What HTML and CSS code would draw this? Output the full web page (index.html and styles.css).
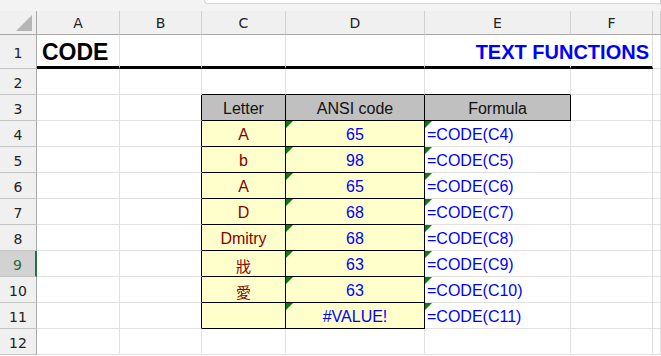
FILE: index.html
```html
<!DOCTYPE html>
<html lang="en">
<head>
    <meta charset="UTF-8">
    <title>CODE - Text Functions</title>
    <link rel="stylesheet" href="styles.css">
</head>
<body>
    <!-- Formula bar edge -->
    <div class="topbar">
        <div class="formula-box"></div>
    </div>

    <!-- Sheet grid -->
    <div class="sheet">
        <!-- Column headers -->
        <div class="corner"><span class="select-all"></span></div>
        <div class="colhead">A</div>
        <div class="colhead">B</div>
        <div class="colhead">C</div>
        <div class="colhead">D</div>
        <div class="colhead">E</div>
        <div class="colhead">F</div>
        <div class="colhead"></div>

        <!-- Row 1 -->
        <div class="rowhead">1</div>
        <div class="cell rule title">CODE</div>
        <div class="cell rule"></div>
        <div class="cell rule"></div>
        <div class="cell rule"></div>
        <div class="cell rule no-right"></div>
        <div class="cell rule subtitle">TEXT FUNCTIONS</div>
        <div class="cell"></div>

        <!-- Row 2 -->
        <div class="rowhead">2</div>
        <div class="cell"></div>
        <div class="cell"></div>
        <div class="cell top-edge"></div>
        <div class="cell top-edge"></div>
        <div class="cell top-edge"></div>
        <div class="cell"></div>
        <div class="cell"></div>

        <!-- Row 3 -->
        <div class="rowhead">3</div>
        <div class="cell"></div>
        <div class="cell left-edge"></div>
        <div class="cell head">Letter</div>
        <div class="cell head">ANSI code</div>
        <div class="cell head">Formula</div>
        <div class="cell"></div>
        <div class="cell"></div>

        <!-- Row 4 -->
        <div class="rowhead">4</div>
        <div class="cell"></div>
        <div class="cell left-edge"></div>
        <div class="cell letter">A</div>
        <div class="cell code flag">65</div>
        <div class="cell formula flag">=CODE(C4)</div>
        <div class="cell"></div>
        <div class="cell"></div>

        <!-- Row 5 -->
        <div class="rowhead">5</div>
        <div class="cell"></div>
        <div class="cell left-edge"></div>
        <div class="cell letter">b</div>
        <div class="cell code flag">98</div>
        <div class="cell formula flag">=CODE(C5)</div>
        <div class="cell"></div>
        <div class="cell"></div>

        <!-- Row 6 -->
        <div class="rowhead">6</div>
        <div class="cell"></div>
        <div class="cell left-edge"></div>
        <div class="cell letter">A</div>
        <div class="cell code flag">65</div>
        <div class="cell formula flag">=CODE(C6)</div>
        <div class="cell"></div>
        <div class="cell"></div>

        <!-- Row 7 -->
        <div class="rowhead">7</div>
        <div class="cell"></div>
        <div class="cell left-edge"></div>
        <div class="cell letter">D</div>
        <div class="cell code flag">68</div>
        <div class="cell formula flag">=CODE(C7)</div>
        <div class="cell"></div>
        <div class="cell"></div>

        <!-- Row 8 -->
        <div class="rowhead">8</div>
        <div class="cell"></div>
        <div class="cell left-edge"></div>
        <div class="cell letter">Dmitry</div>
        <div class="cell code flag">68</div>
        <div class="cell formula flag">=CODE(C8)</div>
        <div class="cell"></div>
        <div class="cell"></div>

        <!-- Row 9 (active row) -->
        <div class="rowhead active">9</div>
        <div class="cell"></div>
        <div class="cell left-edge"></div>
        <div class="cell letter cjk">戕</div>
        <div class="cell code flag">63</div>
        <div class="cell formula flag">=CODE(C9)</div>
        <div class="cell"></div>
        <div class="cell"></div>

        <!-- Row 10 -->
        <div class="rowhead">10</div>
        <div class="cell"></div>
        <div class="cell left-edge"></div>
        <div class="cell letter cjk">愛</div>
        <div class="cell code flag">63</div>
        <div class="cell formula flag">=CODE(C10)</div>
        <div class="cell"></div>
        <div class="cell"></div>

        <!-- Row 11 -->
        <div class="rowhead">11</div>
        <div class="cell"></div>
        <div class="cell left-edge"></div>
        <div class="cell letter"></div>
        <div class="cell code flag">#VALUE!</div>
        <div class="cell formula flag">=CODE(C11)</div>
        <div class="cell"></div>
        <div class="cell"></div>

        <!-- Row 12 -->
        <div class="rowhead">12</div>
        <div class="cell"></div>
        <div class="cell"></div>
        <div class="cell"></div>
        <div class="cell"></div>
        <div class="cell"></div>
        <div class="cell"></div>
        <div class="cell"></div>
    </div>
</body>
</html>
```

FILE: styles.css
```css
/* General */
* {
    box-sizing: border-box;
}

body {
    margin: 0;
    background: #fff;
    font-family: 'Liberation Sans', Arial, sans-serif;
    overflow: hidden;
}

/* Formula bar edge */
.topbar {
    height: 11px;
    background: #f3f3f3;
    padding-left: 204px;
}

.formula-box {
    height: 4px;
    background: #fff;
    border: 1px solid #d6d6d6;
    border-top: none;
    border-bottom-left-radius: 6px;
}

/* Sheet grid */
.sheet {
    display: grid;
    grid-template-columns: 37px 83px 82px 84px 139px 146px 82px 1fr;
    grid-template-rows: 24px 34px repeat(11, 26px);
}

.corner {
    background: #f0f0f0;
    border-right: 1px solid #a8a8a8;
    border-bottom: 1px solid #a8a8a8;
    display: flex;
    align-items: flex-end;
    justify-content: flex-end;
    padding: 0 4px 3px 0;
}

.select-all {
    width: 0;
    height: 0;
    border-left: 16px solid transparent;
    border-bottom: 16px solid #b6b6b6;
}

.colhead {
    background: #f0f0f0;
    border-right: 1px solid #d0d0d0;
    border-bottom: 1px solid #a8a8a8;
    display: flex;
    align-items: center;
    justify-content: center;
    padding-top: 1px;
    font-family: 'DejaVu Sans', sans-serif;
    font-size: 14px;
    color: #222;
}

.rowhead {
    background: #f0f0f0;
    border-right: 1px solid #a8a8a8;
    border-bottom: 1px solid #c4c4c4;
    display: flex;
    align-items: center;
    justify-content: center;
    padding-top: 2px;
    font-family: 'DejaVu Sans', sans-serif;
    font-size: 14px;
    color: #222;
}

.rowhead.active {
    background: #d2d2d2;
    color: #1e6b41;
    border-right: 2px solid #217346;
}

/* Cells */
.cell {
    position: relative;
    border-right: 1px solid #e1e1e1;
    border-bottom: 1px solid #e1e1e1;
    display: flex;
    align-items: center;
    padding-top: 3px;
    font-size: 16px;
    white-space: nowrap;
}

.cell.rule {
    border-bottom: 3px solid #000;
}

.cell.no-right {
    border-right-color: transparent;
}

.title {
    font-size: 23px;
    font-weight: 700;
    padding-left: 5px;
}

.subtitle {
    justify-content: flex-end;
    font-size: 20px;
    font-weight: 700;
    color: #0000ff;
    padding-right: 3px;
}

.top-edge {
    border-bottom-color: #000;
}

.left-edge {
    border-right-color: #000;
}

/* Table */
.head {
    background: #c0c0c0;
    border-right-color: #000;
    border-bottom-color: #000;
    justify-content: center;
    color: #111;
}

.letter {
    background: #ffffcc;
    border-right-color: #000;
    border-bottom-color: #000;
    justify-content: center;
    color: #8a0000;
}

.cjk {
    font-family: 'Noto Sans CJK SC', sans-serif;
    font-size: 15px;
}

.code {
    background: #ffffcc;
    border-right-color: #000;
    border-bottom-color: #000;
    justify-content: center;
    color: #0000ff;
}

.formula {
    color: #0000ff;
    padding-left: 2px;
}

/* Error indicator */
.flag::before {
    content: "";
    position: absolute;
    top: 0;
    left: 0;
    border-top: 7px solid #0a7d0a;
    border-right: 7px solid transparent;
}
```
